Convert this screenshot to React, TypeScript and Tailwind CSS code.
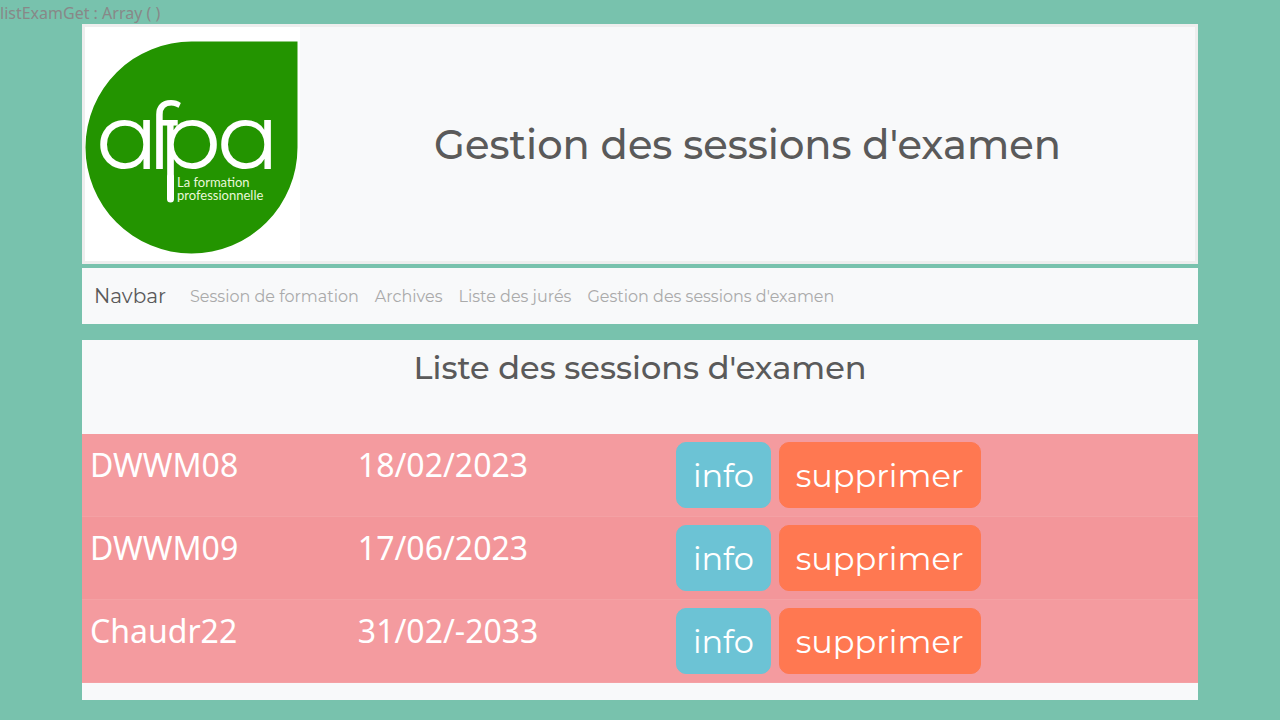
const sessions = [
  { name: "DWWM08", date: "18/02/2023" },
  { name: "DWWM09", date: "17/06/2023" },
  { name: "Chaudr22", date: "31/02/-2033" },
];

const links = [
  "Session de formation",
  "Archives",
  "Liste des jurés",
  "Gestion des sessions d'examen",
];

function Logo() {
  return (
    <svg
      viewBox="0 0 215 234"
      role="img"
      aria-label="afpa, La formation professionnelle"
      className="block h-[234px] w-[215px] shrink-0 bg-white"
    >
      <path
        d="M107 14.500H212.500V120.500A106 106 0 1 1 107 14.500Z"
        fill="#239400"
      />
      <text
        x="11 62 73 132"
        y="142"
        fill="#fff"
        fontSize="93"
        className="font-['Montserrat','Inter',sans-serif] font-normal [font-feature-settings:'ss01','salt']"
      >
        afpa
      </text>
      <line
        x1="85.500"
        y1="150"
        x2="85.500"
        y2="172"
        stroke="#fff"
        strokeWidth="7"
        strokeLinecap="round"
      />
      <g fill="#e9f8d8" fontSize="13" className="font-['Lato',sans-serif]">
        <text x="92" y="160">La formation</text>
        <text x="92" y="173">professionnelle</text>
      </g>
    </svg>
  );
}

export default function App() {
  return (
    <div className="min-h-screen bg-[#78c2ad] pb-5 font-['Noto_Sans','Open_Sans',sans-serif] text-base text-[#888888]">
      <p className="h-6 leading-[26px]">listExamGet : Array ( )</p>
      <div className="mx-auto max-w-[1140px] px-3 font-['Montserrat','Noto_Sans',sans-serif]">
        <header className="flex items-center border-[3px] border-[#eeeeee] bg-[#f8f9fa]">
          <Logo />
          <h1 className="flex-1 pt-[2px] text-center text-[40px] leading-12 font-medium text-[#5a5a5a]">
            Gestion des sessions d'examen
          </h1>
        </header>
        <nav className="mt-1 flex h-14 items-center bg-[#f8f9fa] px-3">
          <a href="#" className="mr-4 text-xl text-[#5a5a5a]">
            Navbar
          </a>
          <ul className="flex pt-[2px] text-[#aaaaaa]">
            {links.map((label) => (
              <li key={label}>
                <a href="#" className="block px-2 py-2">
                  {label}
                </a>
              </li>
            ))}
          </ul>
        </nav>
        <main className="mt-4 bg-[#f8f9fa] pt-2 pb-[17px]">
          <h2 className="mb-[46px] text-center text-[32px] leading-10 font-medium text-[#5a5a5a]">
            Liste des sessions d'examen
          </h2>
          <table className="w-full table-fixed text-left text-[32px] leading-[46px] text-white">
            <colgroup>
              <col className="w-[24%]" />
              <col className="w-[28.5%]" />
              <col />
            </colgroup>
            <tbody className="font-['Noto_Sans','Open_Sans',sans-serif]">
              {sessions.map((s) => (
                <tr
                  key={s.name}
                  className="border-b border-[#f4a1a4] bg-[#f49b9f] align-top even:bg-[#f3969a]"
                >
                  <td className="px-2 py-2">{s.name}</td>
                  <td className="px-2 py-2">{s.date}</td>
                  <td className="px-2 py-2">
                    <div className="flex gap-2 font-['Montserrat','Noto_Sans',sans-serif] leading-12">
                      <button className="rounded-[10px] border border-[#6cc3d5] bg-[#6cc3d5] px-4 pt-[9px] pb-[7px]">
                        info
                      </button>
                      <button className="rounded-[10px] border border-[#ff7851] bg-[#ff7851] px-4 pt-[9px] pb-[7px]">
                        supprimer
                      </button>
                    </div>
                  </td>
                </tr>
              ))}
            </tbody>
          </table>
        </main>
      </div>
    </div>
  );
}
